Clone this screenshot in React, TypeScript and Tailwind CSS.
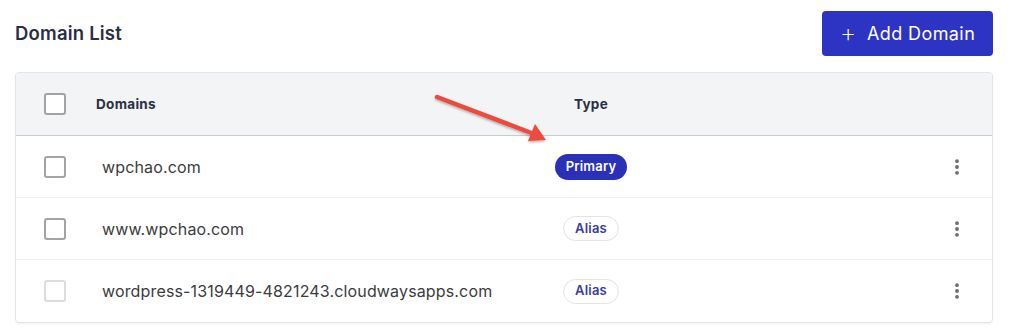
import { MoreVertical } from 'lucide-react'

const ROWS = [
  { name: 'wpchao.com', type: 'Primary', disabled: false },
  { name: 'www.wpchao.com', type: 'Alias', disabled: false },
  { name: 'wordpress-1319449-4821243.cloudwaysapps.com', type: 'Alias', disabled: true },
]

function Check({ disabled }: { disabled?: boolean }) {
  return (
    <span
      className={
        'block w-[22px] h-[22px] rounded-[3px] border-2 bg-white ' +
        (disabled ? 'border-[#dcdcdc]' : 'border-[#a3a3a3]')
      }
    />
  )
}

function Badge({ type }: { type: string }) {
  if (type === 'Primary')
    return (
      <span className="inline-flex items-center h-[26px] px-[11px] rounded-full bg-[#2b30b8] text-white text-[13px] font-semibold tracking-[0.2px]">
        Primary
      </span>
    )
  return (
    <span className="inline-flex items-center h-[25px] px-[11px] rounded-full bg-white border border-[#e3e3e8] text-[#3a3d9c] text-[13px] font-semibold tracking-[0.2px]">
      {type}
    </span>
  )
}

export default function App() {
  return (
    <div className="relative w-[1024px] h-[332px] bg-white px-[15px] pt-[11px] font-['Inter',sans-serif] text-[#2b2f42]">
      <div className="flex items-center justify-between pr-[16px]">
        <h2 className="text-[18.5px] font-semibold tracking-[0.2px] text-[#2a2e43]">Domain List</h2>
        <button className="flex items-center gap-[10px] h-[45px] w-[171px] justify-center rounded-[4px] bg-[#2d33c3] text-white text-[18px] tracking-[0.4px]">
          <span className="text-[26px] leading-none font-extralight -mt-[2px]">+</span>
          Add Domain
        </button>
      </div>

      <div className="mt-[16px] mr-[16px] border border-[#e2e4e7] rounded-[4px] overflow-hidden shadow-[0_1px_2px_rgba(0,0,0,0.05)]">
        <div className="grid grid-cols-[52px_420px_150px_1fr] items-center h-[63px] bg-[#f2f4f5] border-b border-[#c9cbce] pl-[28px]">
          <Check />
          <span className="text-[13.5px] font-bold tracking-[0.3px] text-[#2b2f42]">Domains</span>
          <span className="text-[13.5px] font-bold tracking-[0.3px] text-[#2b2f42] text-center">Type</span>
          <span />
        </div>
        {ROWS.map((r, i) => (
          <div
            key={r.name}
            className={
              'grid grid-cols-[52px_420px_150px_1fr] items-center h-[62px] pl-[28px] ' +
              (i < ROWS.length - 1 ? 'border-b border-[#f1f1f3]' : '')
            }
          >
            <Check disabled={r.disabled} />
            <span className="pl-[6px] text-[16px] tracking-[0.15px] text-[#3b3b40] whitespace-nowrap">{r.name}</span>
            <span className="flex justify-center">
              <Badge type={r.type} />
            </span>
            <span className="flex justify-end pr-[25px]">
              <MoreVertical size={20} strokeWidth={2.6} className="text-[#6b6b6f]" />
            </span>
          </div>
        ))}
      </div>

      <svg className="absolute left-[430px] top-[90px] pointer-events-none" width="125" height="60" viewBox="0 0 125 60">
        <defs>
          <filter id="sh" x="-20%" y="-50%" width="140%" height="200%">
            <feDropShadow dx="0" dy="1.5" stdDeviation="1.2" floodColor="#000" floodOpacity="0.3" />
          </filter>
        </defs>
        <g filter="url(#sh)">
          <line x1="7" y1="7" x2="104" y2="44" stroke="#ec4b3e" strokeWidth="4.5" strokeLinecap="round" />
          <path d="M116 50 L98 51 L105 34 Z" fill="#ec4b3e" />
        </g>
      </svg>
    </div>
  )
}
